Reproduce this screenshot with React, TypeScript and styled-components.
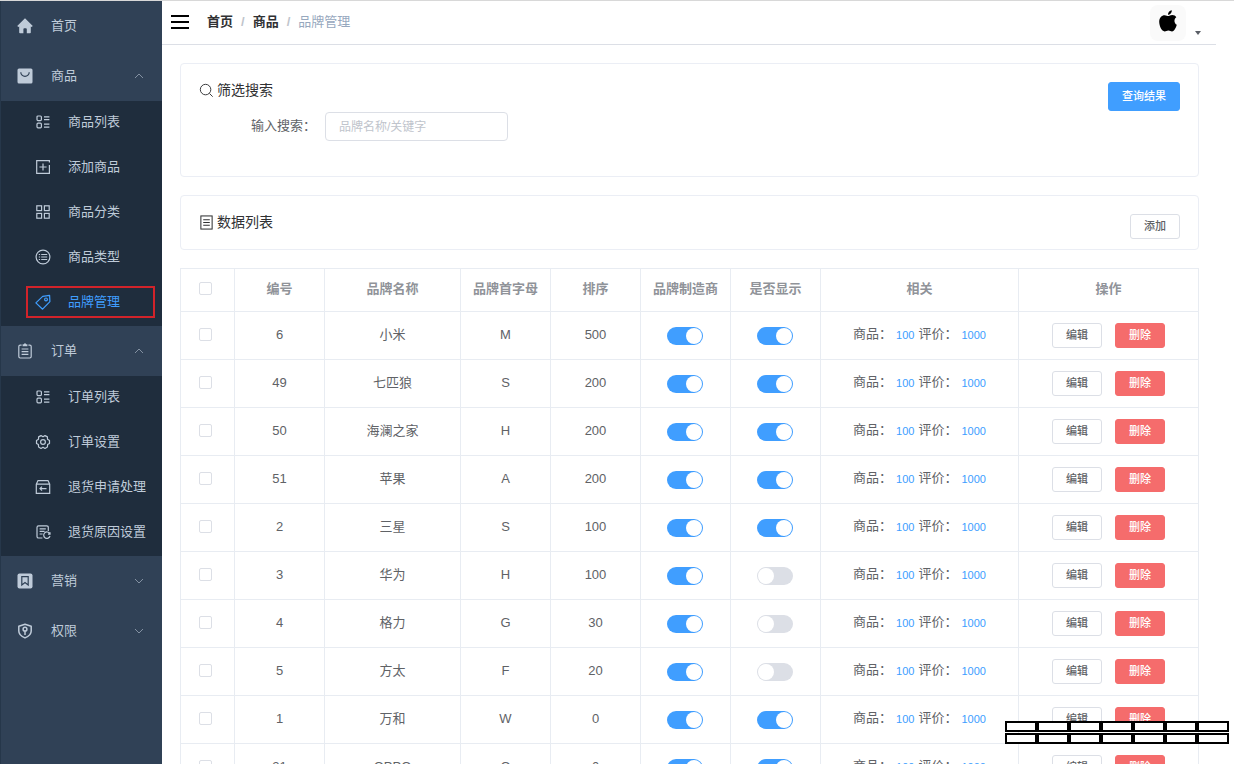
import React, { useState } from "react";
import styled, { createGlobalStyle, css } from "styled-components";

const GlobalStyle = createGlobalStyle`
  *, *::before, *::after { box-sizing: border-box; }
  body {
    margin: 0;
    background: #fff;
    color: #606266;
    font-family: "Liberation Sans", "Noto Sans CJK SC", sans-serif;
    font-size: 13px;
  }
  button, input { font-family: inherit; }
`;

const Shell = styled.div`
  display: flex;
  height: 100vh;
  overflow: hidden;
  border-top: 1px solid #d8d8d8;
`;

/* ---------- sidebar ---------- */

const Sidebar = styled.nav`
  flex: none;
  width: 162px;
  background: #304156;
  border-left: 1px solid #26374a;
  overflow: hidden;
`;

const MenuItem = styled.a`
  display: flex;
  align-items: center;
  width: 100%;
  height: 50px;
  padding: 0 18px 1px 16px;
  color: #bfcbd9;
  font-size: 13px;
  line-height: 20px;
  text-decoration: none;
`;

const MenuToggle = styled(MenuItem).attrs({ as: "button", type: "button" })`
  border: 0;
  background: transparent;
  text-align: left;
  cursor: pointer;
`;

const MenuText = styled.span`
  flex: 1;
  margin-left: 18px;
`;

const SubMenu = styled.div`
  background: #1f2d3d;
`;

const SubItem = styled.a<{ $active?: boolean }>`
  display: flex;
  align-items: center;
  height: 45px;
  padding: 0 7px 4px 25px;
  color: ${(p) => (p.$active ? "#409eff" : "#bfcbd9")};
  font-size: 13px;
  line-height: 20px;
  text-decoration: none;
`;

const SubInner = styled.span<{ $marked?: boolean }>`
  display: flex;
  flex: 1;
  align-items: center;
  height: 32px;
  padding-left: 7px;
  border: 2px solid ${(p) => (p.$marked ? "#d2232a" : "transparent")};
`;

const SubText = styled.span`
  margin-left: 17px;
  white-space: nowrap;
`;

const Icon = styled.svg<{ $size?: number }>`
  flex: none;
  width: ${(p) => p.$size ?? 16}px;
  height: ${(p) => p.$size ?? 16}px;
  fill: none;
  stroke: currentColor;
  stroke-width: 1.2;
`;

const Chevron = styled(Icon)`
  width: 10px;
  height: 10px;
  color: #8391a2;
  stroke-width: 1;
`;

const icons: Record<string, React.ReactNode> = {
  home: (
    <path
      fill="currentColor"
      stroke="none"
      d="M8 0.3 15.8 8 14.6 9 13.8 8.4V14.5Q13.8 15.3 13 15.3H9.8V11.2Q9.8 10.2 8.9 10.2H7.3Q6.4 10.2 6.4 11.2V15.3H3Q2.2 15.3 2.2 14.5V8.4L1.4 9 0.2 8Z"
    />
  ),
  bag: (
    <>
      <rect x="0.5" y="0.5" width="15" height="15" rx="1.5" fill="currentColor" stroke="none" />
      <path stroke="#304156" d="M3.8 4.2a4.2 4.2 0 0 0 8.4 0" />
    </>
  ),
  list: (
    <>
      <rect x="2" y="2" width="4.4" height="4.6" rx="1" />
      <rect x="2" y="9.2" width="4.4" height="4.6" rx="1" />
      <path d="M9 2.8h5.4M9 5.6h5.4M9 10.2h5.4M9 13.2h5.4" />
    </>
  ),
  add: (
    <>
      <path d="M14.4 6V14.3H1.7V1.7H14.4V3.4" />
      <path d="M8 4.4v7.2M4.4 8h7.2" />
    </>
  ),
  grid: (
    <>
      <rect x="1.8" y="1.8" width="4.8" height="4.8" />
      <rect x="9.4" y="1.8" width="4.8" height="4.8" />
      <rect x="1.8" y="9.4" width="4.8" height="4.8" />
      <rect x="9.4" y="9.4" width="4.8" height="4.8" />
    </>
  ),
  type: (
    <>
      <circle cx="8" cy="8" r="6.9" />
      <path d="M6.2 5.5h6M6.2 8h6M6.2 10.5h6M3.8 5.5h1.3M3.8 8h1.3M3.8 10.5h1.3" />
    </>
  ),
  tag: (
    <>
      <path d="M0.9 8.9 7.7 2.4 14.6 1.4 14.9 7.6 7.6 15.2Z" strokeLinejoin="round" />
      <circle cx="11" cy="5.4" r="1.4" />
    </>
  ),
  order: (
    <>
      <path d="M4.6 2.2H3.2Q1.8 2.2 1.8 3.6V13.6Q1.8 15 3.2 15H12.8Q14.2 15 14.2 13.6V3.6Q14.2 2.2 12.8 2.2H11.4" />
      <path d="M5.6 2.2h4.8M8 0.6v1.6" strokeWidth="2" />
      <path d="M4.6 6h6.8M4.6 8.7h6.8M4.6 11.4h6.8" />
    </>
  ),
  gear: (
    <>
      <circle cx="8" cy="8" r="2.4" />
      <path
        strokeLinejoin="round"
        d="M6 1.6 8 2.8 10 1.6 12.4 2.9 12.5 5.2 14.5 6.4V9.4L12.6 10.6 12.4 13 10 14.4 8 13.2 6 14.4 3.6 13 3.4 10.6 1.5 9.4V6.4L3.5 5.2 3.6 2.9Z"
      />
    </>
  ),
  returns: (
    <>
      <path d="M1.3 5.2 3 1.6H13L14.7 5.2V14.3H1.3ZM1.3 5.2H14.7" />
      <path d="M11.5 9.6H5M7 7.6 5 9.6 7 11.6" />
    </>
  ),
  reason: (
    <>
      <path d="M13.3 7V3.4Q13.3 1.8 11.7 1.8H3.6Q2 1.8 2 3.4V12.4Q2 14 3.6 14H7.4" />
      <path d="M4.6 4.8h6.2M4.6 7.4h5M4.6 10h3" />
      <path d="M14.7 9.6A3.2 3.2 0 1 0 15 12M15 8.2v2h-2" />
    </>
  ),
  promo: (
    <>
      <rect x="0.5" y="0.5" width="15" height="15" rx="2" fill="currentColor" stroke="none" />
      <path stroke="#304156" d="M4.8 3.6H11.2V12L8 9.6 4.8 12Z" />
    </>
  ),
  shield: (
    <>
      <path strokeWidth="1.5" d="M8 1.2 14.2 3.2V8Q14.2 12.4 8 14.9 1.8 12.4 1.8 8V3.2Z" strokeLinejoin="round" />
      <circle cx="8" cy="6.2" r="1.9" strokeWidth="1.5" />
      <path strokeWidth="1.5" d="M8 8v4" />
    </>
  ),
  search: (
    <>
      <circle cx="7" cy="7" r="5.6" strokeWidth="1" />
      <path strokeWidth="1" d="M11.1 11.1 14.6 14.6" />
    </>
  ),
  tickets: (
    <>
      <rect x="2" y="1" width="12" height="14" strokeWidth="1.1" />
      <path strokeWidth="1.1" d="M4.5 5h7M4.5 8h7M4.5 11h7" />
    </>
  ),
};

const Glyph = ({ name, size }: { name: string; size?: number }) => (
  <Icon viewBox="0 0 16 16" $size={size} aria-hidden="true">
    {icons[name]}
  </Icon>
);

const Arrow = ({ up }: { up?: boolean }) => (
  <Chevron viewBox="0 0 10 10" aria-hidden="true">
    <path d={up ? "M1 7 5 3 9 7" : "M1 3 5 7 9 3"} />
  </Chevron>
);

interface MenuEntry {
  icon: string;
  label: string;
  open?: boolean;
  children?: { icon: string; label: string; active?: boolean }[];
}

const menu: MenuEntry[] = [
  { icon: "home", label: "首页" },
  {
    icon: "bag",
    label: "商品",
    open: true,
    children: [
      { icon: "list", label: "商品列表" },
      { icon: "add", label: "添加商品" },
      { icon: "grid", label: "商品分类" },
      { icon: "type", label: "商品类型" },
      { icon: "tag", label: "品牌管理", active: true },
    ],
  },
  {
    icon: "order",
    label: "订单",
    open: true,
    children: [
      { icon: "list", label: "订单列表" },
      { icon: "gear", label: "订单设置" },
      { icon: "returns", label: "退货申请处理" },
      { icon: "reason", label: "退货原因设置" },
    ],
  },
  { icon: "promo", label: "营销", children: [] },
  { icon: "shield", label: "权限", children: [] },
];

const MenuGroup = ({ entry }: { entry: MenuEntry }) => {
  const [open, setOpen] = useState(!!entry.open);
  if (!entry.children) {
    return (
      <MenuItem href="#home">
        <Glyph name={entry.icon} />
        <MenuText>{entry.label}</MenuText>
      </MenuItem>
    );
  }
  return (
    <>
      <MenuToggle aria-expanded={open} onClick={() => setOpen(!open)}>
        <Glyph name={entry.icon} />
        <MenuText>{entry.label}</MenuText>
        <Arrow up={open} />
      </MenuToggle>
      {open && (
        <SubMenu>
          {entry.children.map((c) => (
            <SubItem key={c.label} href="#page" $active={c.active}>
              <SubInner $marked={c.active}>
                <Glyph name={c.icon} />
                <SubText>{c.label}</SubText>
              </SubInner>
            </SubItem>
          ))}
        </SubMenu>
      )}
    </>
  );
};

/* ---------- main area ---------- */

const Main = styled.main`
  flex: 1;
  min-width: 0;
  padding-right: 18px;
  overflow-y: auto;
  scrollbar-width: none;
`;

const Header = styled.header`
  display: flex;
  align-items: center;
  height: 44px;
  padding: 0 15px 0 9px;
  border-bottom: 1px solid #dcdfe6;
`;

const Hamburger = styled.button`
  display: flex;
  flex-direction: column;
  gap: 4px;
  width: 18px;
  padding: 0 0 2px;
  border: 0;
  background: transparent;
  cursor: pointer;
`;

const HamburgerBar = styled.span`
  height: 2px;
  background: #000;
`;

const Crumbs = styled.div`
  display: flex;
  flex: 1;
  gap: 8px;
  margin-left: 18px;
  padding-bottom: 2px;
  line-height: 20px;
`;

const CrumbLink = styled.a`
  color: #303133;
  font-weight: 700;
  text-decoration: none;
`;

const CrumbSlash = styled.span`
  color: #c0c4cc;
  font-weight: 700;
`;

const CrumbCurrent = styled.span`
  color: #97a8be;
`;

const UserMenu = styled.button`
  display: flex;
  align-items: flex-end;
  gap: 9px;
  padding: 0;
  border: 0;
  background: transparent;
  cursor: pointer;
`;

const Avatar = styled.span`
  display: flex;
  justify-content: center;
  width: 36px;
  height: 36px;
  padding-top: 5px;
  border-radius: 8px;
  background: #fafafa;
`;

const Caret = styled.span`
  margin-bottom: 6px;
  border: 3px solid transparent;
  border-top: 4px solid #5a5e66;
  border-bottom: 0;
`;

const Content = styled.div`
  display: flex;
  flex-direction: column;
  gap: 18px;
  padding: 18px 17px 18px 18px;
`;

const Card = styled.section<{ $tall?: boolean }>`
  display: flex;
  align-items: flex-start;
  justify-content: space-between;
  min-height: ${(p) => (p.$tall ? 114 : 55)}px;
  padding: 18px 18px 10px;
  border: 1px solid #ebeef5;
  border-radius: 4px;
`;

const CardTitle = styled.h2`
  display: flex;
  align-items: center;
  gap: 3px;
  margin: 0;
  color: #303133;
  font-size: 14px;
  font-weight: 400;
  line-height: 16px;
`;

const SearchForm = styled.form`
  display: flex;
  align-items: center;
  margin: 14px 0 0 52px;
`;

const FieldLabel = styled.label`
  width: 74px;
  padding-bottom: 2px;
  line-height: 20px;
`;

const TextField = styled.input`
  width: 183px;
  height: 29px;
  padding: 0 13px;
  border: 1px solid #dcdfe6;
  border-radius: 4px;
  color: #606266;
  font-size: 12px;
  &::placeholder { color: #c0c4cc; }
`;

const variants = {
  primary: css`
    width: 72px;
    height: 29px;
    border-color: #409eff;
    background: #409eff;
    color: #fff;
  `,
  plain: css`
    min-width: 50px;
    height: 25px;
    border-color: #dcdfe6;
    background: #fff;
    color: #606266;
  `,
  danger: css`
    min-width: 50px;
    height: 25px;
    border-color: #f56c6c;
    background: #f56c6c;
    color: #fff;
  `,
};

const Button = styled.button<{ $variant: keyof typeof variants }>`
  padding: 0 0 1px;
  border: 1px solid;
  border-radius: 3px;
  font-size: 11px;
  font-weight: 500;
  line-height: 16px;
  cursor: pointer;
  ${(p) => variants[p.$variant]}
`;

/* ---------- table ---------- */

const Table = styled.table`
  width: 100%;
  border-collapse: collapse;
  table-layout: fixed;
  text-align: center;
`;

const Th = styled.th`
  height: 43px;
  padding: 0 0 3px;
  border: 1px solid #e8ecf2;
  color: #909399;
  font-weight: 700;
  line-height: 20px;
`;

const Td = styled.td`
  height: 48px;
  padding: 0 0 2px;
  border: 1px solid #e8ecf2;
  line-height: 20px;
`;

const Col = styled.col<{ $w?: number }>`
  width: ${(p) => (p.$w ? `${p.$w}px` : "auto")};
`;

const CheckSlot = styled.div`
  padding-right: 4px;
`;

const SwitchSlot = styled.div`
  padding: 3px 1px 0 0;
`;

const Check = styled.input.attrs({ type: "checkbox" })`
  appearance: none;
  display: block;
  width: 13px;
  height: 13px;
  margin: 0 auto;
  border: 1px solid #dcdfe6;
  border-radius: 2px;
  background: #fff;
  &:checked { background: #409eff; border-color: #409eff; }
`;

const Switch = styled.input.attrs({ type: "checkbox", role: "switch" })`
  appearance: none;
  display: block;
  width: 36px;
  height: 18px;
  margin: 0 auto;
  padding: 1px;
  border-radius: 9px;
  background: #dcdfe6;
  cursor: pointer;
  &::before {
    content: "";
    display: block;
    width: 16px;
    height: 16px;
    border-radius: 50%;
    background: #fff;
  }
  &:checked { background: #409eff; }
  &:checked::before { margin-left: 18px; }
`;

const Related = styled.div`
  display: flex;
  justify-content: center;
  white-space: nowrap;
`;

const CountLink = styled.a`
  margin: 1px 4px 0;
  color: #409eff;
  font-size: 11px;
  text-decoration: none;
  &:last-child { margin-right: 0; }
`;

const Actions = styled.div`
  display: flex;
  justify-content: center;
  gap: 13px;
  padding-top: 2px;
`;

const columns: { label: string; w?: number }[] = [
  { label: "编号", w: 90 },
  { label: "品牌名称" },
  { label: "品牌首字母", w: 90 },
  { label: "排序", w: 90 },
  { label: "品牌制造商", w: 90 },
  { label: "是否显示", w: 90 },
  { label: "相关", w: 198 },
  { label: "操作", w: 180 },
];

const brands = [
  { id: 6, name: "小米", letter: "M", sort: 500, shown: true },
  { id: 49, name: "七匹狼", letter: "S", sort: 200, shown: true },
  { id: 50, name: "海澜之家", letter: "H", sort: 200, shown: true },
  { id: 51, name: "苹果", letter: "A", sort: 200, shown: true },
  { id: 2, name: "三星", letter: "S", sort: 100, shown: true },
  { id: 3, name: "华为", letter: "H", sort: 100, shown: false },
  { id: 4, name: "格力", letter: "G", sort: 30, shown: false },
  { id: 5, name: "方太", letter: "F", sort: 20, shown: false },
  { id: 1, name: "万和", letter: "W", sort: 0, shown: true },
  { id: 21, name: "OPPO", letter: "O", sort: 0, shown: true },
];

/* ---------- watermark over the bottom right corner ---------- */

const Watermark = styled.div`
  position: fixed;
  right: 5px;
  bottom: 20px;
  display: grid;
  grid-template-columns: repeat(7, 32px);
  row-gap: 1px;
  pointer-events: none;
`;

const WatermarkCell = styled.span`
  height: 11px;
  border: 2px solid #000;
  background: #fff;
`;

export default function App() {
  return (
    <>
      <GlobalStyle />
      <Shell>
        <Sidebar>
          {menu.map((entry) => (
            <MenuGroup key={entry.label} entry={entry} />
          ))}
        </Sidebar>
        <Main>
          <Header>
            <Hamburger type="button" aria-label="菜单">
              <HamburgerBar />
              <HamburgerBar />
              <HamburgerBar />
            </Hamburger>
            <Crumbs>
              <CrumbLink href="#home">首页</CrumbLink>
              <CrumbSlash>/</CrumbSlash>
              <CrumbLink href="#goods">商品</CrumbLink>
              <CrumbSlash>/</CrumbSlash>
              <CrumbCurrent>品牌管理</CrumbCurrent>
            </Crumbs>
            <UserMenu type="button" aria-label="用户">
              <Avatar>
                <svg width="18" height="22" viewBox="0 0 18 22" aria-hidden="true">
                  <path d="M12.8 0.2C13 2.6 11 4.8 9 4.8 8.8 2.5 10.6 0.5 12.8 0.2ZM9.2 6.1C10.2 6.1 11.4 5 13.2 5 15 5 16.5 5.9 17.3 7.2 14.6 9.1 15 13.2 17.8 14.8 17 17.6 15.4 21.4 13 21.4 11.6 21.4 11.1 20.6 9.4 20.6 7.7 20.6 7.1 21.4 5.6 21.4 2.8 21.4 0.2 16 0.2 11.8 0.2 7.7 2.8 5.2 5.6 5.2 7.2 5.2 8.4 6.1 9.2 6.1Z" />
                </svg>
              </Avatar>
              <Caret />
            </UserMenu>
          </Header>
          <Content>
            <Card $tall>
              <div>
                <CardTitle>
                  <Glyph name="search" size={15} />
                  筛选搜索
                </CardTitle>
                <SearchForm>
                  <FieldLabel htmlFor="keyword">输入搜索：</FieldLabel>
                  <TextField id="keyword" placeholder="品牌名称/关键字" />
                </SearchForm>
              </div>
              <Button type="button" $variant="primary">查询结果</Button>
            </Card>
            <Card>
              <CardTitle>
                <Glyph name="tickets" size={15} />
                数据列表
              </CardTitle>
              <Button type="button" $variant="plain">添加</Button>
            </Card>
            <Table>
              <colgroup>
                <Col $w={54} />
                {columns.map((c) => (
                  <Col key={c.label} $w={c.w} />
                ))}
              </colgroup>
              <thead>
                <tr>
                  <Th scope="col">
                    <CheckSlot><Check aria-label="全选" /></CheckSlot>
                  </Th>
                  {columns.map((c) => (
                    <Th key={c.label} scope="col">{c.label}</Th>
                  ))}
                </tr>
              </thead>
              <tbody>
                {brands.map((b) => (
                  <tr key={b.id}>
                    <Td><CheckSlot><Check aria-label={b.name} /></CheckSlot></Td>
                    <Td>{b.id}</Td>
                    <Td>{b.name}</Td>
                    <Td>{b.letter}</Td>
                    <Td>{b.sort}</Td>
                    <Td>
                      <SwitchSlot><Switch defaultChecked aria-label="品牌制造商" /></SwitchSlot>
                    </Td>
                    <Td>
                      <SwitchSlot><Switch defaultChecked={b.shown} aria-label="是否显示" /></SwitchSlot>
                    </Td>
                    <Td>
                      <Related>
                        商品：<CountLink href="#products">100</CountLink>
                        评价：<CountLink href="#reviews">1000</CountLink>
                      </Related>
                    </Td>
                    <Td>
                      <Actions>
                        <Button type="button" $variant="plain">编辑</Button>
                        <Button type="button" $variant="danger">删除</Button>
                      </Actions>
                    </Td>
                  </tr>
                ))}
              </tbody>
            </Table>
          </Content>
        </Main>
      </Shell>
      <Watermark aria-hidden="true">
        {Array.from({ length: 14 }, (_, i) => (
          <WatermarkCell key={i} />
        ))}
      </Watermark>
    </>
  );
}
